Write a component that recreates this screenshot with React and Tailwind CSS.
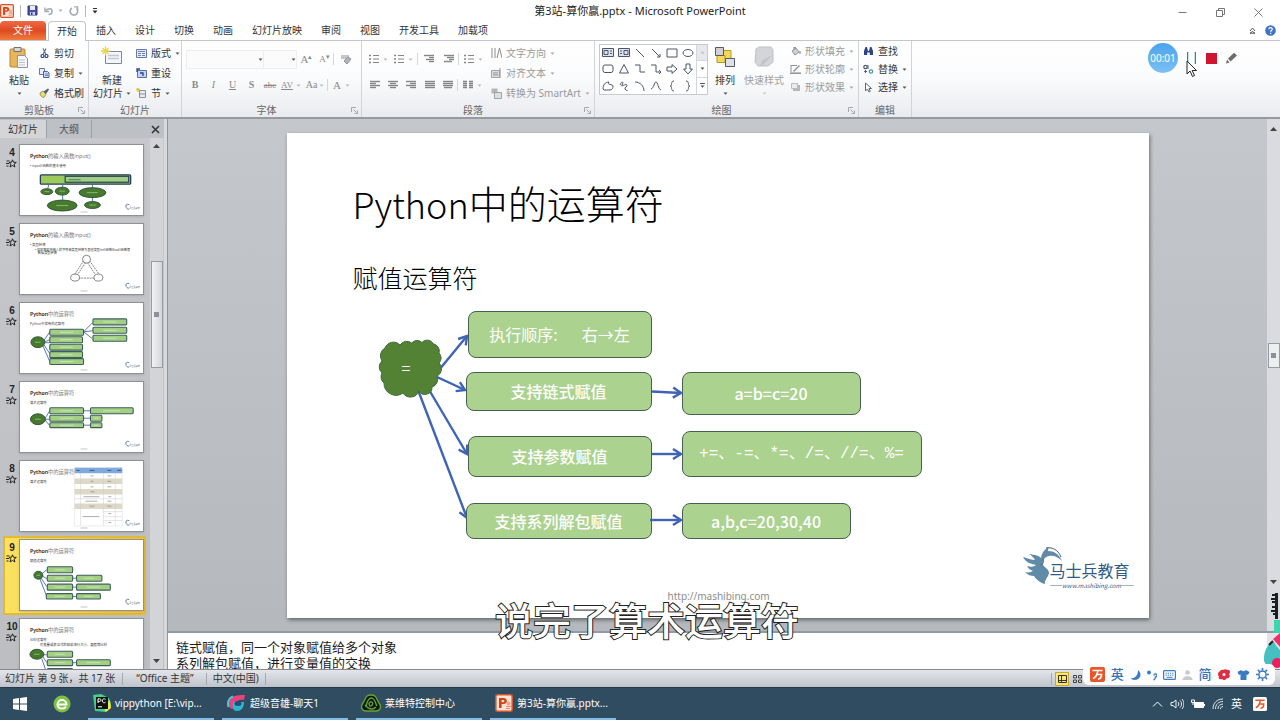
import React from "react";

const Svg = ({ w, h, children, className = "", vb }) => (
  <svg
    width={w}
    height={h}
    viewBox={vb || `0 0 ${w} ${h}`}
    fill="none"
    aria-hidden="true"
    className={`shrink-0 ${className}`}
  >
    {children}
  </svg>
);

const Caret = ({ className = "text-[#555]" }) => (
  <Svg w={5} h={3} className={className}>
    <path d="M0.5 0.5h4L2.5 2.8z" fill="currentColor" />
  </Svg>
);

/* ---------- title bar ---------- */

const PptLogo = ({ size = 14 }) => (
  <Svg w={size} h={size} vb="0 0 18 18">
    <rect x="0.8" y="0.8" width="16.4" height="16.4" rx="1.5" fill="#fbe3d8" stroke="#d3542a" strokeWidth="1.6" />
    <path d="M4 14V4h4.6c4.4 0 4.4 6 0 6H6.600v4z M6.600 6v2.200h1.600c1.600 0 1.600-2.200 0-2.200z" fill="#cf4517" fillRule="evenodd" />
    <path d="M11 12.500h5M11 14.500h4" stroke="#e98a63" />
    <circle cx="13.500" cy="9.500" r="2" fill="#f0a585" />
  </Svg>
);

function TitleBar() {
  return (
    <header className="flex h-[21px] shrink-0 items-center justify-between bg-white">
      <div className="flex flex-1 items-center gap-[6px]">
        <PptLogo />
        <span className="h-3 w-px bg-[#b9b9b9]" />
        <button aria-label="保存">
          <Svg w={11} h={11}>
            <path d="M1 1h9v9H1z" fill="#4a4fae" stroke="#34387f" />
            <path d="M3 1h5v4H3z" fill="#e9ecfb" />
            <path d="M3 7h5v3H3z" fill="#c9cdf0" />
            <path d="M4 7.5h1.5V10H4z" fill="#34387f" />
          </Svg>
        </button>
        <button aria-label="撤消" className="flex items-center gap-1">
          <Svg w={10} h={10}>
            <path d="M2 4.500C4 2 8 2 8 5S5.500 8.500 4.500 8.500" stroke="#a5a9b3" strokeWidth="1.600" />
            <path d="M1 1.500v4h4" stroke="#a5a9b3" strokeWidth="1.400" />
          </Svg>
          <Caret className="text-[#aaa]" />
        </button>
        <button aria-label="重复">
          <Svg w={10} h={10}>
            <path d="M3 2a3.800 3.800 0 1 0 4.500 0.500" stroke="#a5a9b3" strokeWidth="1.600" />
            <path d="M5 0.800h3.600v3.600" stroke="#a5a9b3" strokeWidth="1.300" />
          </Svg>
        </button>
        <span className="h-3 w-px bg-[#b9b9b9]" />
        <button aria-label="自定义快速访问工具栏">
          <Svg w={6} h={6}>
            <path d="M1 0.500h4" stroke="#333" />
            <path d="M0.500 2.500h5L3 5.500z" fill="#333" />
          </Svg>
        </button>
      </div>
      <h1 className="text-[11px] leading-4 text-[#1c1c1c]">第3站-算你赢.pptx - Microsoft PowerPoint</h1>
      <div className="flex flex-1 items-center justify-end gap-[29px] text-[#777]">
        <button aria-label="最小化" className="pt-1">
          <Svg w={9} h={9}><path d="M0.500 4.500h8" stroke="currentColor" /></Svg>
        </button>
        <button aria-label="还原" className="pt-1">
          <Svg w={9} h={9}>
            <path d="M0.500 2.500h6v6h-6zM2.500 2.500v-2h6v6h-2" stroke="currentColor" />
          </Svg>
        </button>
        <button aria-label="关闭" className="mr-[17px] pt-1">
          <Svg w={9} h={9}><path d="M0.500 0.500l8 8M8.500 0.500l-8 8" stroke="currentColor" /></Svg>
        </button>
      </div>
    </header>
  );
}

/* ---------- tabs ---------- */

const TABS = ["开始", "插入", "设计", "切换", "动画", "幻灯片放映", "审阅", "视图", "开发工具", "加载项"];

function RibbonTabs() {
  return (
    <nav className="flex h-[20px] shrink-0 items-end border-b border-[#c3c6cb] bg-white text-[10px] text-[#333]">
      <button className="h-[19px] w-[46px] rounded-t-sm bg-gradient-to-b from-[#ef6a45] via-[#dd4a22] to-[#f07a3c] text-white">
        文件
      </button>
      <div className="ml-[2px] flex items-end gap-px">
        {TABS.map((t, i) => (
          <button
            key={t}
            className={
              i === 0
                ? "-mb-px h-[20px] rounded-t-sm border border-b-0 border-[#c3c6cb] bg-white px-2"
                : "h-[19px] px-[9px]"
            }
          >
            {t}
          </button>
        ))}
      </div>
      <div className="ml-auto flex h-[19px] items-center gap-[9px] pr-1">
        <button aria-label="折叠功能区">
          <Svg w={7} h={7}>
            <path d="M1 4l2.500-3L6 4M1 6.200l2.500-1.700L6 6.200z" stroke="#555" />
          </Svg>
        </button>
        <button aria-label="帮助">
          <Svg w={11} h={11}>
            <circle cx="5.500" cy="5.500" r="5.300" fill="#3f73c4" />
            <path d="M3.800 4.300c0-2.200 3.500-2.200 3.500 0 0 1.200-1.700 1.200-1.700 2.500M5.600 7.800v1.200" stroke="#fff" strokeWidth="1.200" />
          </Svg>
        </button>
      </div>
    </nav>
  );
}

/* ---------- ribbon ---------- */

const Launcher = () => (
  <Svg w={7} h={7}>
    <path d="M0.500 5V0.500H5" stroke="#a3a6ab" />
    <path d="M2.500 2.500l3 3M6.500 3.500v3h-3" stroke="#a3a6ab" />
  </Svg>
);

function Group({ label, width, launcher, children }) {
  return (
    <section className={`flex shrink-0 flex-col border-r border-[#d0d3d8] ${width}`}>
      <div className="flex min-h-0 flex-1">{children}</div>
      <div className="flex h-[14px] items-center text-[#666]">
        <span className="flex-1 text-center">{label}</span>
        {launcher && (
          <button aria-label={`${label}设置`} className="mr-[3px]">
            <Launcher />
          </button>
        )}
      </div>
    </section>
  );
}

const Row = ({ icon, children, caret, tall, dim }) => (
  <button className={`flex items-center gap-1 whitespace-nowrap ${tall ? "h-5" : "h-[18px]"} ${dim ? "text-[#9a9a9a]" : "text-[#333]"}`}>
    <span className="flex w-3 shrink-0 justify-center">{icon}</span>
    {children}
    {caret && <Caret className={dim ? "text-[#aaa]" : "text-[#555]"} />}
  </button>
);

const Tool = ({ label, children, w = "w-[19px]" }) => (
  <button aria-label={label} className={`flex h-5 items-center justify-center text-[#8a8a8a] ${w}`}>
    {children}
  </button>
);

const Sep = () => <span className="h-3 w-px bg-[#d5d7da]" />;

const Scissors = () => (
  <Svg w={9} h={10}>
    <path d="M3 0.500l3 6M6 0.500l-3 6" stroke="#5b6fa5" strokeWidth="1.200" />
    <circle cx="2.500" cy="8" r="1.500" stroke="#26418c" strokeWidth="1.200" />
    <circle cx="6.500" cy="8" r="1.500" stroke="#26418c" strokeWidth="1.200" />
  </Svg>
);
const Copy = () => (
  <Svg w={11} h={10}>
    <path d="M0.500 0.500h5v6h-5z" fill="#e8eefb" stroke="#6579ab" />
    <path d="M4.500 3.500h4l1.500 1.500v4.500h-5.500z" fill="#c9d8f5" stroke="#4c639c" />
    <path d="M6 6h3M6 7.500h3" stroke="#6f8ac6" />
  </Svg>
);
const Brush = () => (
  <Svg w={11} h={10}>
    <path d="M1 5l3-2 3 3-2 3.500c-2 0-4-2-4-4.500z" fill="#e5dc7c" stroke="#9a9a4c" />
    <path d="M4.500 3.500L9 0.500l1 1-3 4.500z" fill="#54606e" />
  </Svg>
);
const LayoutIcon = () => (
  <Svg w={11} h={9}>
    <path d="M0.500 0.500h10v8h-10z" fill="#e6ecf8" stroke="#68769c" />
    <path d="M2 2.500h7M2 4.500h3M2 6.500h3M6 4.500h3M6 6.500h3" stroke="#6d83b8" />
  </Svg>
);
const ResetIcon = () => (
  <Svg w={11} h={10}>
    <path d="M1.500 2.500h9v7h-9z" fill="#c5d4f0" stroke="#5c6fa3" />
    <path d="M1 4V1h3M4 5h3v3" stroke="#28418c" strokeWidth="1.300" />
  </Svg>
);
const SectionIcon = () => (
  <Svg w={11} h={10}>
    <path d="M3.500 2.500h6v7h-6z" fill="#e9ebf0" stroke="#8a8f9b" />
    <path d="M4 6h5" stroke="#8a8f9b" />
    <path d="M0 1.500h4M2 0v4" stroke="#e0c335" strokeWidth="1.400" />
  </Svg>
);

function ClipboardGroup() {
  return (
    <Group label="剪贴板" width="w-[89px]" launcher>
      <button className="flex w-[38px] flex-col items-center pt-[5px] text-[#333]">
        <Svg w={20} h={23}>
          <rect x="1" y="3" width="15" height="18" rx="1" fill="#e8b55b" stroke="#b88633" />
          <path d="M5 1.500h7v4H5z" fill="#d5d7db" stroke="#77736b" />
          <path d="M8.500 9.500h7l3 3v9h-10z" fill="#f6f8fc" stroke="#8894ae" />
          <path d="M10 14h6M10 16.500h6M10 19h6" stroke="#b6c0d3" />
        </Svg>
        <span className="mt-[3px] leading-4">粘贴</span>
        <Caret className="mt-1 text-[#555]" />
      </button>
      <div className="flex flex-col pt-[2px]">
        <Row tall icon={<Scissors />}>剪切</Row>
        <Row tall caret icon={<Copy />}>复制</Row>
        <Row tall icon={<Brush />}>格式刷</Row>
      </div>
    </Group>
  );
}

function SlidesGroup() {
  return (
    <Group label="幻灯片" width="w-[93px]">
      <button className="flex w-[46px] flex-col items-center pt-[5px] text-[#333]">
        <Svg w={22} h={22}>
          <path d="M4.500 5.500h16v12h-16z" fill="#f3f5fa" stroke="#7f8899" />
          <path d="M7 9.500h11M7 12.500h11" stroke="#c2c8d4" strokeWidth="1.500" />
          <path d="M0 5h9M4.500 0.500v9M1.500 2l6 6M7.500 2l-6 6" stroke="#e8d648" strokeWidth="1.300" />
        </Svg>
        <span className="mt-[6px] leading-[13px]">新建</span>
        <span className="flex items-center gap-[3px] leading-[13px]">幻灯片<Caret /></span>
      </button>
      <div className="flex flex-col pt-[2px]">
        <Row tall caret icon={<LayoutIcon />}>版式</Row>
        <Row tall icon={<ResetIcon />}>重设</Row>
        <Row tall caret icon={<SectionIcon />}>节</Row>
      </div>
    </Group>
  );
}

function FontGroup() {
  return (
    <Group label="字体" width="w-[180px]" launcher>
      <div className="flex flex-col pt-2 pl-1">
        <div className="flex h-5 items-center">
          <div className="flex h-[19px] items-center border border-[#eceef1] bg-[#fbfbfc]">
            <select disabled aria-label="字体" className="w-[71px] appearance-none bg-transparent"><option></option></select>
            <Caret />
          </div>
          <div className="flex h-[19px] items-center border border-l-0 border-[#eceef1] bg-[#fbfbfc]">
            <select disabled aria-label="字号" className="w-[27px] appearance-none bg-transparent"><option></option></select>
            <Caret />
          </div>
          <Tool label="增大字号"><span className="font-['Liberation_Serif'] text-[11px]">A</span><span className="mb-1 text-[7px]">▴</span></Tool>
          <Tool label="减小字号" w="w-[17px]"><span className="font-['Liberation_Serif'] text-[9px]">A</span><span className="mb-1 text-[7px]">▾</span></Tool>
          <Sep />
          <Tool label="清除格式" w="w-6">
            <Svg w={12} h={11}>
              <path d="M1 1h8v4H1z" fill="#c4c6ca" />
              <path d="M4 7l4-4 3 2-4 5z" fill="#b1b4b9" stroke="#8f9298" />
            </Svg>
          </Tool>
        </div>
        <div className="mt-[6px] flex h-5 items-center font-['Liberation_Serif'] text-[10px]">
          <Tool label="加粗" w="w-[18px]"><b>B</b></Tool>
          <Tool label="倾斜"><i>I</i></Tool>
          <Tool label="下划线"><u>U</u></Tool>
          <Tool label="文字阴影"><b>S</b></Tool>
          <Tool label="删除线" w="w-[18px]"><s className="text-[9px]">abc</s></Tool>
          <Tool label="字符间距" w="w-6"><u className="mr-[3px] text-[9px]">AV</u><Caret className="text-[#bbb]" /></Tool>
          <Tool label="更改大小写" w="w-6"><span className="mr-[2px]">Aa</span><Caret className="text-[#bbb]" /></Tool>
          <Sep />
          <Tool label="字体颜色" w="w-[27px]"><span className="mr-1 text-[11px]">A</span><Caret className="text-[#bbb]" /></Tool>
        </div>
      </div>
    </Group>
  );
}

const Lines = ({ rows }) => (
  <Svg w={10} h={10}>
    {rows.map(([x, w], i) => (
      <path key={i} d={`M${x} ${i * 2 + 1.5}h${w}`} stroke="#858585" strokeWidth="1.400" />
    ))}
  </Svg>
);
const ListIcon = () => (
  <Svg w={10} h={10}>
    <path d="M0 1.500h2M0 5h2M0 8.500h2" stroke="#858585" strokeWidth="1.500" />
    <path d="M4 1.500h6M4 5h6M4 8.500h6" stroke="#858585" />
  </Svg>
);

function ParagraphGroup() {
  return (
    <Group label="段落" width="w-[233px]" launcher>
      <div className="flex w-[128px] flex-col pt-2 pl-1">
        <div className="flex h-5 items-center">
          <Tool label="项目符号" w="w-6"><ListIcon /><Caret className="ml-1 text-[#bbb]" /></Tool>
          <Tool label="编号" w="w-[27px]"><ListIcon /><Caret className="ml-1 text-[#bbb]" /></Tool>
          <Sep />
          <Tool label="减少缩进" w="w-[22px]"><Lines rows={[[0, 10], [5, 5], [2, 8], [5, 5]]} /></Tool>
          <Tool label="增加缩进" w="w-[18px]"><Lines rows={[[0, 10], [3, 7], [5, 5], [0, 8]]} /></Tool>
          <Sep />
          <Tool label="行距" w="w-7"><ListIcon /><Caret className="ml-1 text-[#bbb]" /></Tool>
        </div>
        <div className="mt-[6px] flex h-5 items-center">
          <Tool label="左对齐" w="w-[18px]"><Lines rows={[[0, 10], [0, 6], [0, 10], [0, 6]]} /></Tool>
          <Tool label="居中" w="w-[18px]"><Lines rows={[[0, 10], [2, 6], [0, 10], [2, 6]]} /></Tool>
          <Tool label="右对齐" w="w-[18px]"><Lines rows={[[0, 10], [4, 6], [0, 10], [4, 6]]} /></Tool>
          <Tool label="两端对齐"><Lines rows={[[0, 10], [0, 10], [0, 10], [0, 10]]} /></Tool>
          <Tool label="分散对齐" w="w-[18px]"><Lines rows={[[0, 10], [0, 10], [0, 10], [1, 8]]} /></Tool>
          <Sep />
          <Tool label="分栏" w="w-7">
            <Svg w={10} h={10}>
              <path d="M0 1.500h4M0 3.500h4M0 5.500h4M0 7.500h4M6 1.500h4M6 3.500h4M6 5.500h4M6 7.500h4" stroke="#858585" strokeWidth="1.300" />
            </Svg>
            <Caret className="ml-1 text-[#bbb]" />
          </Tool>
        </div>
      </div>
      <div className="flex flex-col pt-[2px]">
        <Row tall dim caret icon={<Svg w={11} h={11}><path d="M1 0v10M4 0v10M6 10L8.500 0 11 10" stroke="#8b8b8b" /></Svg>}>文字方向</Row>
        <Row tall dim caret icon={<Svg w={11} h={11}><path d="M0.500 2.500h8v7h-8z" fill="#dedfe1" stroke="#a1a3a7" /><path d="M9 0v10M2 5h5M2 7h5" stroke="#8f8f8f" /></Svg>}>对齐文本</Row>
        <Row tall dim caret icon={<Svg w={11} h={11}><path d="M0.500 0.500h6v5h-6z" fill="#b4b6ba" /><path d="M3.500 4.500h7v6h-7z" fill="#dedfe1" stroke="#9fa2a6" /></Svg>}>转换为 SmartArt</Row>
      </div>
    </Group>
  );
}

const SHAPES = [
  ["文本框", <path key="a" d="M0.500 1.500h11v8H0.500z M2 3.500h4v4H2z M8 4h2M8 6.500h2" fill="#dde3ef" />],
  ["竖排文本框", <path key="a" d="M0.500 1.500h11v8H0.500z M6 3.500h4v4H6z M2 4h2M2 6.500h2" fill="#dde3ef" />],
  ["直线", <path key="a" d="M2 2l8 8" />],
  ["箭头", <path key="a" d="M2 2l8 8M10 7v3H7" />],
  ["矩形", <path key="a" d="M1 2h10v8H1z" />],
  ["椭圆", <ellipse key="a" cx="6" cy="6" rx="5" ry="3.500" />],
  ["圆角矩形", <rect key="a" x="1" y="2" width="10" height="7.500" rx="2" />],
  ["三角形", <path key="a" d="M6 1.500L10.500 10h-9z" />],
  ["肘形连接符", <path key="a" d="M1 2h5v7h5" />],
  ["肘形箭头", <path key="a" d="M1 2h5v7h5M9 7l2 2-2 2" />],
  ["右箭头", <path key="a" d="M1 4h5V1.500L11 6l-5 4.500V8H1z" />],
  ["下箭头", <path key="a" d="M4 1h4v5h2.500L6 11 1.500 6H4z" />],
  ["任意多边形", <path key="a" d="M1 9c0-4 2-7 6-7-3 3 4 2 4 4s-1 4-3 4H2z" />],
  ["自由曲线", <path key="a" d="M2 5c2-5 4-3 2 0s4-2 5 0-3 2-2 4 3 1 2 2" />],
  ["弧形", <path key="a" d="M1 2c5 0 9 4 9 9" />],
  ["曲线", <path key="a" d="M1 9C4 8 4 2 6 2s2 7 5 8" />],
  ["左大括号", <path key="a" d="M8 1C4 1 7 6 4 6c3 0 0 5 4 5" />],
  ["右大括号", <path key="a" d="M4 1c4 0 1 5 4 5-3 0 0 5-4 5" />],
];

function DrawingGroup() {
  return (
    <Group label="绘图" width="w-[264px]" launcher>
      <div className="mt-[3px] ml-1 flex h-[51px] border border-[#c6c9ce] bg-white">
        <div className="grid grid-cols-6 grid-rows-3">
          {SHAPES.map(([name, d]) => (
            <button key={name} aria-label={name} className="flex w-4 items-center justify-center">
              <Svg w={12} h={12}><g stroke="#4d5566">{d}</g></Svg>
            </button>
          ))}
        </div>
        <div className="grid w-[11px] grid-rows-3 divide-y divide-[#d3d6da] border-l border-[#d3d6da]">
          <button aria-label="上一行" className="flex items-center justify-center bg-[#e6e8eb]"><Caret className="rotate-180 text-[#bbb]" /></button>
          <button aria-label="下一行" className="flex items-center justify-center"><Caret /></button>
          <button aria-label="更多形状" className="flex flex-col items-center justify-center gap-px"><span className="h-px w-[5px] bg-[#555]" /><Caret /></button>
        </div>
      </div>
      <button className="flex w-[34px] flex-col items-center pt-[5px] text-[#333]">
        <Svg w={22} h={22}>
          <path d="M8 4.500h9v9H8z" fill="#f2d95a" stroke="#b49a2c" />
          <path d="M3 9.500h8v7H3z" fill="#f2d95a" stroke="#b49a2c" />
          <path d="M1.500 1.500h8v8h-8z" fill="#d4cfd6" stroke="#5b5560" />
          <path d="M11.500 12.500h9v8h-9z" fill="#dde0ea" stroke="#565b6b" />
        </Svg>
        <span className="mt-1 leading-4">排列</span>
        <Caret className="mt-1 text-[#555]" />
      </button>
      <button className="flex w-11 flex-col items-center pt-[5px] text-[#a0a0a0]">
        <Svg w={22} h={22}>
          <path d="M3 3l3-2h12l2 3v12l-5 4H5l-3-4z" fill="#d3d5d8" stroke="#bfc1c5" />
          <path d="M19 9l-8 9-4 2 2-5z" fill="#c0c2c6" />
        </Svg>
        <span className="mt-1 whitespace-nowrap leading-4">快速样式</span>
        <Caret className="mt-1 text-[#ccc]" />
      </button>
      <div className="ml-[3px] flex flex-col pt-px">
        <Row dim caret icon={<Svg w={11} h={10}><path d="M2 5l4-3 3 4-4 3z" fill="#cfd1d4" stroke="#8f9195" /><path d="M4 4V1.500h2M10 5v3" stroke="#8f9195" strokeWidth="1.200" /></Svg>}>形状填充</Row>
        <Row dim caret icon={<Svg w={11} h={10}><path d="M1 1.500h6M1 1v7" stroke="#8f9195" /><path d="M3 7l6-6 1 1-6 6z" fill="#8f9195" /><path d="M0 9.200h11" stroke="#8f9195" strokeWidth="1.500" /></Svg>}>形状轮廓</Row>
        <Row dim caret icon={<Svg w={11} h={10}><path d="M3 3h7v6H3z" fill="#b5b7bb" /><path d="M1.500 1.500h6v5h-6z" fill="#ececee" stroke="#b9bbbf" /></Svg>}>形状效果</Row>
      </div>
    </Group>
  );
}

function EditGroup() {
  return (
    <Group label="编辑" width="w-[53px]">
      <div className="ml-[3px] flex flex-col pt-px">
        <Row icon={<Svg w={11} h={10}><path d="M1 9V5l1.500-4H4l1 4h1l1-4h1.500L10 5v4H6.800V6.500H4.200V9z" fill="#2f4486" /></Svg>}>查找</Row>
        <Row caret icon={<Svg w={11} h={10}><circle cx="2.500" cy="3" r="1.700" stroke="#4e5a75" strokeWidth="1.200" /><path d="M5 1v4M4 7.500H1.500M3 6L1.500 7.500 3 9" stroke="#4e5a75" /><circle cx="8" cy="7.500" r="1.700" stroke="#49a" strokeWidth="1.200" /></Svg>}>替换</Row>
        <Row caret icon={<Svg w={8} h={11}><path d="M1.500 1v8l2-2 1.500 3 1.300-.700L5 6.500h2.500z" fill="#fff" stroke="#5b6478" /></Svg>}>选择</Row>
      </div>
    </Group>
  );
}

function Ribbon() {
  return (
    <div className="flex h-[78px] shrink-0 border-b-2 border-[#96999e] bg-gradient-to-b from-white via-[#fafbfc] to-[#e9ebef] text-[10px] leading-[14px]">
      <ClipboardGroup />
      <SlidesGroup />
      <FontGroup />
      <ParagraphGroup />
      <DrawingGroup />
      <EditGroup />
    </div>
  );
}

/* ---------- slide thumbnails ---------- */

const Box = ({ x, y, w, h = 6 }) => (
  <g>
    <rect x={x} y={y} width={w} height={h} rx="1" fill="#a3cf85" stroke="#3d5f5a" strokeWidth="1.100" />
    <path d={`M${x + w * 0.3} ${y + h / 2}h${w * 0.4}`} stroke="#d3e9c4" strokeWidth="0.800" />
  </g>
);
const Blob = ({ x, y, rx, ry }) => (
  <g>
    <ellipse cx={x} cy={y} rx={rx} ry={ry} fill="#467a2c" stroke="#2e4c3d" strokeWidth="0.900" />
    <path d={`M${x - rx * 0.4} ${y}h${rx * 0.8}`} stroke="#a9cf92" strokeWidth="0.700" />
  </g>
);
const Link = ({ d }) => <path d={d} stroke="#4468b8" strokeWidth="0.900" />;

const Thumb = ({ title, sub, brand, children }) => (
  <svg viewBox="0 0 124 71" className="block w-full bg-white" fill="none">
    <text x="10" y="13.500" fontSize="5.300" fill="#777">
      <tspan fontWeight="600" fill="#222">Python</tspan>{title}
    </text>
    <text x="10" y="22.500" fontSize="3.400" fill="#444">{sub}</text>
    {children}
    {brand && (
      <g>
        <path d="M110 60c-3-1-4 1-3 3s3 2 3 1" stroke="#5c7288" strokeWidth="0.900" />
        <text x="110" y="64.500" fontSize="2.200" fill="#5c7288">马士兵教育</text>
        <path d="M61 67.500h7" stroke="#999" strokeWidth="0.600" />
      </g>
    )}
  </svg>
);

const THUMBS = [
  {
    n: 4, title: "的输入函数input()", sub: "• input()函数的基本使用",
    art: (
      <g>
        <rect x="20.500" y="30" width="91" height="9.500" rx="1" fill="#9ccb5c" stroke="#27405a" strokeWidth="1.300" />
        <rect x="45.500" y="31.500" width="64" height="6" fill="#a3cf85" stroke="#27405a" strokeWidth="1.200" />
        <path d="M49 35h12" stroke="#3d5f5a" strokeWidth="0.800" />
        <Link d="M29 40l-1 4M43 40v20M73 40v18" />
        <Blob x={27} y={47} rx={6} ry={3} /><Blob x={42.500} y={46.500} rx={7} ry={4} />
        <Blob x={73} y={48} rx={13.500} ry={5} /><Blob x={42.500} y={61} rx={15} ry={5.500} /><Blob x={73} y={60.500} rx={8} ry={3.500} />
      </g>
    ),
  },
  {
    n: 5, title: "的输入函数input()", sub: "• 类型转换",
    art: (
      <g>
        <text x="15" y="27" fontSize="3.200" fill="#333">• 如果需要将输入的字符串类型转换为其他类型int()函数float()函数等</text>
        <text x="18" y="30.500" fontSize="3.200" fill="#333">数据类型转换</text>
        <g stroke="#666" strokeWidth="0.800">
          <path d="M64 37L55 51M70 37l10 14M59 54.500h18M66 39l-8 12M68 39l8 12" strokeDasharray="2 0.800" />
          <circle cx="67" cy="35.500" r="4" fill="#fff" /><ellipse cx="55.500" cy="54" rx="4.500" ry="3.500" fill="#fff" /><ellipse cx="79" cy="54" rx="4.500" ry="3.500" fill="#fff" />
        </g>
      </g>
    ),
  },
  {
    n: 6, title: "中的运算符", sub: "Python中常用的运算符",
    art: (
      <g>
        <Link d="M24 38l6-9M25 39l5-2M25 40h5M24 42l6 9M23 43l7 16M64 29l9-9M64 29l9-1M64 29l9 7" />
        <Blob x={18} y={39.500} rx={7} ry={5.500} />
        <Box x={30} y={26.500} w={34} /><Box x={30} y={34} w={33} /><Box x={30} y={41.500} w={33} /><Box x={30} y={49} w={33} /><Box x={30} y={56} w={34} />
        <Box x={73.500} y={16} w={34} /><Box x={73.500} y={24.500} w={34} /><Box x={73.500} y={32.500} w={34} />
      </g>
    ),
  },
  {
    n: 7, title: "中的运算符", sub: "算术运算符",
    art: (
      <g>
        <Link d="M25 37l5-8M25 37.500h5M25 38l5 6M64 29h7M64 36.500h7M64 43.500h7" />
        <Blob x={18} y={37.500} rx={7.500} ry={5.500} />
        <Box x={30} y={26} w={34} /><Box x={30} y={33.500} w={34} /><Box x={30} y={41} w={34} h={5} />
        <Box x={71} y={26} w={43} /><Box x={71} y={33.500} w={11.500} /><Box x={71} y={41} w={11.500} h={5} />
      </g>
    ),
  },
  {
    n: 8, title: "中的运算符", sub: "算术运算符",
    art: (
      <g>
        <path d="M55 6.500h48v59H55z" fill="#fff" stroke="#ddd" strokeWidth="0.500" />
        <path d="M55 9.500h48" stroke="#7faadb" strokeWidth="5.500" />
        <path d="M55 20.500h48M55 31h48M55 45.500h48" stroke="#ddd8c8" strokeWidth="5.500" />
        <path d="M61 12v53M84 12v53M96 12v53M55 38h48M84 51h19M84 56h19M84 60h19" stroke="#ccc" strokeWidth="0.500" />
        <path d="M57 9.500h3M70 9.500h5M88 9.500h4M98 9.500h4" stroke="#33557f" strokeWidth="0.900" />
        <path d="M71 15h3M71 20.500h3M71 26h3M71 31h4M64 36h16M66 40.500h12M70 45.500h5M63 56h17M88 15h4M88 20.500h4M88 26h4M89 36h3M88 40.500h4M88 45.500h4M89 53h3M89 62h3" stroke="#8a8a86" strokeWidth="0.700" />
      </g>
    ),
  },
  {
    n: 9, title: "中的运算符", sub: "赋值运算符",
    art: (
      <g>
        <Link d="M22 34l5-4M22 36l5 3M21 38l6 9M20 39l7 18M53 38.500h4M53 47.500h4M53 57h4" />
        <Blob x={18.500} y={35.500} rx={4.500} ry={4} />
        <Box x={27.500} y={27} w={25.500} /><Box x={27.500} y={35.500} w={25.500} /><Box x={27.500} y={44.500} w={25.500} /><Box x={26.500} y={54} w={26.500} h={5.500} />
        <Box x={57} y={35.500} w={25.500} /><Box x={57} y={44.500} w={34} /><Box x={57} y={54} w={24} h={5.500} />
      </g>
    ),
  },
  {
    n: 10, title: "中的运算符", sub: "比较运算符",
    art: (
      <g>
        <text x="20" y="27.500" fontSize="3.400" fill="#333">对变量或表达式的结果进行大小、真假等比较</text>
        <Link d="M23 36h4M23 38l4 6M22 40l5 15M53 44h4" />
        <Blob x={17} y={35.500} rx={7} ry={5} />
        <Box x={27.500} y={32.500} w={25.500} /><Box x={27.500} y={41} w={25.500} /><Box x={57} y={41} w={34} /><Box x={27.500} y={50} w={25.500} />
      </g>
    ),
  },
];

const StarMark = () => (
  <Svg w={11} h={9}>
    <path d="M0.500 2h3M0 4.500h3M0.500 7h2" stroke="#222" />
    <path d="M6.500 0.800l1 2.400 2.800.2-2.200 1.700.8 2.900-2.400-1.500L4 8l.9-2.900L3 3.400l2.600-.2z" stroke="#222" />
  </Svg>
);

const UpArrow = ({ className = "" }) => (
  <Svg w={7} h={4} className={className}><path d="M0 4L3.500 0 7 4z" fill="#444" /></Svg>
);

function SlidePanel() {
  return (
    <aside className="flex w-[164px] shrink-0 flex-col bg-gradient-to-b from-[#c6c8cc] to-[#bcbec2]">
      <div className="flex h-[19px] shrink-0 items-center bg-[#bdc0c5] pt-px text-[10px] text-[#333]">
        <button className="h-full w-[46px] bg-[#d3d5d9]">幻灯片</button>
        <button className="h-full w-[46px] border-x border-[#9ea1a6] text-[#555]">大纲</button>
        <button aria-label="关闭窗格" className="mr-1 ml-auto">
          <Svg w={9} h={9}><path d="M1 1l7 7M8 1L1 8" stroke="#333" strokeWidth="1.500" /></Svg>
        </button>
      </div>
      <div className="flex min-h-0 flex-1">
        <ol className="min-w-0 flex-1 overflow-hidden pt-[3px] pl-[3px]">
          {THUMBS.map((t) => (
            <li
              key={t.n}
              className={`mr-1 flex h-[79px] items-start border-2 ${
                t.n === 9
                  ? "border-[#e3bb2e] bg-gradient-to-r from-[#fbe25f] to-[#f6c24a]"
                  : "border-transparent"
              }`}
            >
              <div className="flex w-[14px] flex-col items-center gap-px pt-1">
                <span className="font-['Liberation_Sans'] text-[10px] font-bold leading-[11px] text-[#222]">{t.n}</span>
                <StarMark />
              </div>
              <button className="mt-px w-[126px] border border-[#8e9196] shadow-sm" aria-label={`幻灯片 ${t.n}`}>
                <Thumb title={t.title} sub={t.sub} brand={t.n < 10}>{t.art}</Thumb>
              </button>
            </li>
          ))}
        </ol>
        <div className="flex w-[13px] flex-col items-center bg-[#d2d4d8] py-[6px]">
          <UpArrow />
          <span className="flex-[112]" />
          <div className="flex h-[107px] w-3 items-center justify-center border border-[#989ba1] bg-gradient-to-r from-[#f1f2f4] to-[#d3d6da]">
            <span className="size-[5px] bg-[#8d9096]" />
          </div>
          <span className="flex-[288]" />
          <UpArrow className="rotate-180" />
        </div>
        <span className="w-px" />
      </div>
    </aside>
  );
}

/* ---------- slide ---------- */

const Node = ({ pos, children, kind = "font-medium" }) => (
  <div className={`absolute flex items-center justify-center whitespace-pre rounded-lg border border-[#47604f] bg-[#abd28f] text-base leading-5 text-white ${kind} ${pos}`}>
    {children}
  </div>
);

function Slide() {
  return (
    <article className="relative h-[485px] w-[862px] shrink-0 bg-white font-['Noto_Sans_CJK_SC',sans-serif] shadow-[1px_2px_4px_rgba(0,0,0,0.45)]">
      <h2 className="absolute top-[41px] left-[66px] whitespace-nowrap text-[39px] font-light leading-[56px] text-black">
        <span className="text-[36px]">Python</span>中的运算符
      </h2>
      <p className="absolute top-[130px] left-[66px] whitespace-nowrap text-[25px] font-light leading-7 text-black">赋值运算符</p>

      <svg viewBox="0 0 862 485" fill="none" className="absolute inset-0" aria-hidden="true">
        <defs>
          <marker id="head" markerWidth="14" markerHeight="14" refX="10" refY="7" orient="auto" markerUnits="userSpaceOnUse">
            <path d="M2 2l8 5-8 5" fill="none" stroke="#3f64b5" strokeWidth="2.400" />
          </marker>
        </defs>
        <g stroke="#3f64b5" strokeWidth="2.400">
          <path d="M152 237L180 203" markerEnd="url(#head)" />
          <path d="M150 244L178 257" markerEnd="url(#head)" />
          <path d="M141 255L180 321" markerEnd="url(#head)" />
          <path d="M131 257L180 385" markerEnd="url(#head)" />
        </g>
        <path
          d="M98 215A9 9 0 0 1 113 212 A8 8 0 0 1 124.700 210 A7 7 0 0 1 135 209.500 A7 7 0 0 1 146.500 211 A7 7 0 0 1 152 220 A7 7 0 0 1 152 230 A8 8 0 0 1 150 243 A8 8 0 0 1 145 254 A7 7 0 0 1 132 258 A9 9 0 0 1 116 260 A12 12 0 0 1 97 250 A8 8 0 0 1 95 240 A8 8 0 0 1 95 228 A9 9 0 0 1 98 215z"
          fill="#548235"
          stroke="#3f6a3d"
        />
      </svg>
      <span className="absolute top-[224px] left-[115px] text-base leading-5 text-white">=</span>

      <Node pos="left-[181px] top-[178px] w-[184px] h-[47px]" kind="gap-6"><span>执行顺序:</span><span>右→左</span></Node>
      <Node pos="left-[179px] top-[239px] w-[186px] h-[39px]">支持链式赋值</Node>
      <Node pos="left-[181px] top-[303px] w-[184px] h-[41px]">支持参数赋值</Node>
      <Node pos="left-[179px] top-[370px] w-[186px] h-[36px]">支持系列解包赋值</Node>
      <Node pos="left-[395px] top-[239px] w-[179px] h-[43px]">a=b=c=20</Node>
      <Node pos="left-[395px] top-[298px] w-[240px] h-[46px]" kind="font-['Liberation_Mono','Noto_Sans_CJK_SC',monospace]">
        +=、-=、*=、/=、//=、%=
      </Node>
      <Node pos="left-[395px] top-[370px] w-[169px] h-[36px]">a,b,c=20,30,40</Node>

      <svg viewBox="0 0 862 485" fill="none" className="absolute inset-0" aria-hidden="true">
        <g stroke="#3f64b5" strokeWidth="2.400">
          <path d="M365 258.500L394 260" markerEnd="url(#head)" />
          <path d="M365 321H394" markerEnd="url(#head)" />
          <path d="M363 387H394" markerEnd="url(#head)" />
        </g>
      </svg>

      <div className="absolute top-[412px] left-[735px] flex items-end">
        <Svg w={42} h={40}>
          <path d="M1 12c5 1 8 3 12 3-2-3-3-4-6-6 6 1 9 1 12 4 1-6 4-9 8-11-1 2-1 3-1 4 6 0 11 3 14 10-4-4-8-6-13-5-5 1-7 5-6 9 2 3 6 4 6 8-1 5-5 7-4 11-5-1-9-5-11-8-3 0-6-1-9-4 4 1 6 0 8-1-3-1-5-3-6-5 4 1 7 1 9-1-4-1-10-2-13-8z" fill="#5f8aa8" />
          <path d="M24 3c5-1 12 1 15 9M21 14c1 3 0 5-2 6" stroke="#3f6487" />
        </Svg>
      </div>
      <div className="absolute top-[425px] left-[763px] w-[84px] text-[#315b86]">
        <p className="whitespace-nowrap text-base leading-6">马士兵教育</p>
        <div className="flex items-center">
          <span className="h-px flex-1 bg-[#9db4c9]" />
          <span className="text-[6px] italic leading-[8px]">www.mashibing.com</span>
          <span className="h-px flex-1 bg-[#9db4c9]" />
        </div>
      </div>
      <p className="absolute top-[455px] left-[381px] font-['Noto_Sans',sans-serif] text-[10px] leading-4 text-[#8d8d8d]">http://mashibing.com</p>
    </article>
  );
}

function Editor() {
  return (
    <main className="flex min-w-0 flex-1 flex-col border-l border-[#8f959d]">
      <div className="flex min-h-0 flex-1">
        <div className="flex min-w-0 flex-1 items-center justify-center overflow-hidden bg-gradient-to-b from-[#c4c8cc] to-[#b5b9bd]">
          <Slide />
        </div>
        <div className="flex w-[13px] flex-col items-center bg-[#d9dbdf] pt-[8px] pb-[47px]">
          <UpArrow />
          <span className="flex-1" />
          <div className="flex h-[25px] w-3 items-center justify-center border border-[#989ba1] bg-[#eceef0]">
            <span className="size-[5px] bg-[#8d9096]" />
          </div>
          <span className="flex-1" />
          <UpArrow className="rotate-180" />
        </div>
      </div>
      <div className="flex h-[38px] shrink-0 border-t-2 border-[#8f9ba6] bg-white">
        <textarea
          aria-label="备注"
          rows={2}
          className="min-w-0 flex-1 resize-none overflow-hidden bg-white pt-[6px] pl-2 text-[13px] leading-4 text-[#1c1c1c] outline-none"
          defaultValue={"链式赋值，同一个对象赋值给多个对象\n系列解包赋值，进行变量值的交换"}
        />
        <span className="w-[13px] bg-[#e3e4e7]" />
      </div>
    </main>
  );
}

/* ---------- status bar ---------- */

function StatusBar() {
  return (
    <footer className="flex h-[18px] shrink-0 items-center border-t border-[#85888e] bg-gradient-to-b from-[#e3e5e9] to-[#bfc4cc] pl-[5px] text-[10px] text-[#333]">
      <span>幻灯片 第 9 张，共 17 张</span>
      <span className="mx-[7px] h-3 w-px bg-[#a5a8ae]" />
      <span className="px-[6px]">“Office 主题”</span>
      <span className="mx-[6px] h-3 w-px bg-[#a5a8ae]" />
      <span>中文(中国)</span>
      <span className="mx-[6px] h-3 w-px bg-[#a5a8ae]" />
      <div className="ml-auto flex items-center gap-px pr-[196px]">
        <span className="mr-[2px] h-3 w-px bg-[#a5a8ae]" />
        <button aria-label="普通视图" className="flex size-[14px] items-center justify-center border border-[#c9a92c] bg-[#fbe678]">
          <Svg w={9} h={8}><path d="M0.500 0.500h8v7h-8zM0.500 5.500h3M3.500 0.500v7M3.500 5.500h5" stroke="#333" /></Svg>
        </button>
        <button aria-label="幻灯片浏览" className="flex size-[14px] items-center justify-center">
          <Svg w={9} h={8}><path d="M0.500 0.500h3v2.500h-3zM5.500 0.500h3v2.500h-3zM0.500 5h3v2.500h-3zM5.500 5h3v2.500h-3z" stroke="#444" /></Svg>
        </button>
      </div>
    </footer>
  );
}

/* ---------- taskbar ---------- */

const WanIcon = ({ s, invert }) => (
  <Svg w={s} h={s} vb="0 0 15 15">
    <rect width="15" height="15" rx="2" fill={invert ? "#fff" : "#e8562a"} />
    <path d="M2.500 3.500h10M3 11.500c3-1 4-3 5-8M6 7.500h5.500c0 2-1 4.500-3.500 4.500" stroke={invert ? "#e8562a" : "#fff"} strokeWidth="1.600" />
  </Svg>
);

const APPS = [
  {
    name: "vippython [E:\\vip...",
    icon: (
      <Svg w={18} h={18}>
        <path d="M0 1l8-1 8 4 2 8-5 6-11-1z" fill="#3fd08c" />
        <path d="M10 12l7-6 1 8-5 4z" fill="#f3e84a" />
        <rect x="3" y="3" width="12" height="12" fill="#111" />
        <path d="M5 9V4.800h1.500c2 0 2 2.600 0 2.600H5M12.500 5.300c-1.500-1-3.200-.3-3.200 1.500s1.700 2.500 3.200 1.500M5 12.800h4" stroke="#fff" />
      </Svg>
    ),
  },
  {
    name: "超级音雄-聊天1",
    icon: (
      <Svg w={19} h={18}>
        <path d="M1 9C1 3 6 1 18 1l-1 5C11 5 8 8 9 12l-4 3C2 14 1 12 1 9z" fill="#e8437c" />
        <path d="M6 8h11c0 6-3 9-7 9s-5-3-4-9z" fill="#2fb6cf" />
        <ellipse cx="11" cy="9.500" rx="3.500" ry="2.500" fill="#1f4f77" />
        <path d="M1.500 13C0 8 2 4 6 2.500" stroke="#47c8dc" strokeWidth="2" />
      </Svg>
    ),
  },
  {
    name: "莱维特控制中心",
    icon: (
      <Svg w={20} h={18}>
        <path d="M10 1c6 0 5 4 8 8s1 8-3 8H5c-4 0-6-4-3-8s2-8 8-8z" fill="#0d1a0c" stroke="#63a437" strokeWidth="1.300" />
        <path d="M5 13c1-7 3-9 6-9 3 1 3 4 5 8M4 11c5 6 9 4 11 2M8 9c2-3 5 0 3 2s-3 1-3-2z" stroke="#63a437" strokeWidth="1.300" />
      </Svg>
    ),
  },
  { name: "第3站-算你赢.pptx...", icon: <PptLogo size={18} /> },
];

function Taskbar() {
  return (
    <div className="flex h-[33px] shrink-0 items-stretch border-t border-[#25394a] bg-[#304c61] text-[10px] text-white">
      <button aria-label="开始" className="flex w-10 items-center justify-center">
        <Svg w={14} h={14}>
          <path d="M0 2l6-.9v5.500H0zM7 1l7-1v6.600H7zM0 7.500h6V13l-6-.9zM7 7.500h7V14l-7-1z" fill="#fff" />
        </Svg>
      </button>
      <button aria-label="浏览器" className="flex w-11 items-center justify-center">
        <Svg w={18} h={18}>
          <circle cx="9" cy="9" r="8.500" fill="#7cc242" />
          <path d="M4.500 9.500h9c0-6-9-6-9 0 0 5 7 5 8.500 2" stroke="#fff" strokeWidth="2" />
        </Svg>
      </button>
      <div className="ml-1 flex gap-2">
        {APPS.map((a) => (
          <button key={a.name} className="flex w-[126px] items-center gap-[4px] border-b-2 border-[#86bde6] pl-[5px] whitespace-nowrap">
            {a.icon}
            {a.name}
          </button>
        ))}
      </div>
      <div className="ml-auto flex items-center gap-[7px] pr-[13px]">
        <button aria-label="显示隐藏的图标"><Svg w={11} h={8}><path d="M1 6.500L5.500 2 10 6.500" stroke="#fff" /></Svg></button>
        <Svg w={14} h={12}>
          <path d="M1 4.500h2L6 2v8L3 7.500H1zM8 4c1 1.200 1 2.800 0 4M10 2.500c2 2 2 5 0 7M12 1c2.500 3 2.500 7 0 10" stroke="#e8eef2" />
        </Svg>
        <Svg w={14} h={10}>
          <path d="M3.500 3.500h9v5h-9z" fill="#fff" stroke="#fff" /><path d="M13.500 5v2M0.500 1h3v2.500h-3zM2 3.500V6" stroke="#fff" />
        </Svg>
        <Svg w={12} h={12}>
          <path d="M1 11C1 5 5 1 11 1M3.500 11c0-4.500 3-7.500 7.500-7.500M6 11c0-3 2-5 5-5M8.500 11c0-1.500 1-2.500 2.500-2.500" stroke="#dfe7ec" />
        </Svg>
        <span className="text-[11px]">英</span>
        <span className="ml-1"><WanIcon s={14} invert /></span>
      </div>
    </div>
  );
}

/* ---------- floating layers ---------- */

function Recorder() {
  return (
    <div className="absolute top-[43px] right-[42px] flex items-center gap-[9px]">
      <div className="flex size-[30px] items-center justify-center rounded-full bg-gradient-to-b from-[#4aa3ee] to-[#7cc0f3] text-[10px] text-white">00:01</div>
      <button aria-label="暂停"><Svg w={9} h={12}><path d="M0.500 0v12M8.500 0v12" stroke="#2387a5" strokeWidth="1.500" /></Svg></button>
      <button aria-label="停止" className="ml-px size-[11px] bg-[#cf1530]" />
      <button aria-label="画笔">
        <Svg w={12} h={12}><path d="M0 11.500l1-4 2.500 3zM2 6.500L8 0.800 11 3.500 4.500 9.500z" fill="#6d6d6d" /></Svg>
      </button>
      <Svg w={12} h={18} className="absolute top-[17px] left-[38px]">
        <path d="M1 1v13l3-3 2.500 5.500 2-1L6.200 10.500H10.500z" fill="#fff" stroke="#222" />
      </Svg>
    </div>
  );
}

function ImeBar() {
  return (
    <div className="absolute right-[5px] bottom-[35px] flex h-[21px] w-[192px] items-center justify-between rounded-md bg-[#fdfdfe] pr-[6px] pl-[7px] text-[13px] font-medium leading-none text-[#3573b8]">
      <WanIcon s={15} />
      <button>英</button>
      <button aria-label="月亮模式"><Svg w={11} h={12}><path d="M8 1c0 5-2 8-7.500 8.500C3 12 10 11.500 10.500 6 10.500 4 9.500 2 8 1z" fill="#3a7cc4" /></Svg></button>
      <button aria-label="标点"><Svg w={11} h={12}><circle cx="3" cy="3.500" r="2" fill="#3a7cc4" /><path d="M8 6.500a1.500 1.500 0 1 1 1.500 1.500c0 1.500-.8 2.500-2 3" stroke="#3a7cc4" strokeWidth="1.400" /></Svg></button>
      <button aria-label="软键盘"><Svg w={13} h={10}><rect x="0.600" y="0.600" width="11.800" height="8.800" rx="1" stroke="#3a7cc4" strokeWidth="1.200" /><path d="M2.500 3.200h8M2.500 5.200h8" stroke="#3a7cc4" strokeDasharray="1.300 0.900" /><path d="M3.500 7.300h6" stroke="#3a7cc4" /></Svg></button>
      <button aria-label="账户"><Svg w={11} h={12}><circle cx="5.500" cy="3.500" r="2.300" fill="#c9c9cb" /><path d="M0.500 11c0-5 10-5 10 0z" fill="#c9c9cb" /></Svg></button>
      <button>简</button>
      <button aria-label="表情"><Svg w={14} h={12}><path d="M1 4c2-1 2-4 5-3 2-1 3-1 4 0 3-1 4 3 2 4 2 2 0 5-2 4-2 3-4 2-5 1-3 1-4-1-3-3-1 0-1-2-1-3z" fill="#dc2f43" /><circle cx="7" cy="5.500" r="1.500" fill="#fff" /></Svg></button>
      <button aria-label="皮肤"><Svg w={13} h={12}><path d="M4 1c1 1.500 4 1.500 5 0l3.500 2-1.500 3-1.500-.5V11h-6V5.500L2 6 .5 3z" fill="#3a7cc4" /></Svg></button>
      <button aria-label="设置">
        <Svg w={13} h={13}>
          <circle cx="6.500" cy="6.500" r="3.600" stroke="#3a7cc4" strokeWidth="1.500" />
          <path d="M6.500 0v2.500M6.500 10.500V13M0 6.500h2.500M10.500 6.500H13M1.900 1.900l1.800 1.800M9.300 9.300l1.800 1.800M11.100 1.900L9.300 3.700M3.700 9.300l-1.800 1.800" stroke="#3a7cc4" strokeWidth="1.600" />
        </Svg>
      </button>
    </div>
  );
}

function SideMascot() {
  return (
    <Svg w={17} h={82} className="absolute right-0 bottom-[47px]">
      <path d="M12 2h3v26h-3z" fill="#1c1f22" />
      <path d="M9 4h4M8 8h5M9 11h4M9 16h4M8 20h5M10 23h3" stroke="#1c1f22" strokeWidth="2" />
      <path d="M11 29h6v13h-6z" fill="#3fd3ae" />
      <path d="M17 42l-7 6 7 8z" fill="#f0306b" />
      <path d="M1 70C0 58 8 50 11 51c2 4 4 6 6 8v15H3z" fill="#45bfc0" />
      <path d="M6 54l4-4" stroke="#222" strokeWidth="2" />
      <circle cx="14" cy="72" r="5" fill="#ec1f5f" />
    </Svg>
  );
}

export default function App() {
  return (
    <div className="relative flex h-screen flex-col overflow-hidden bg-white font-['Noto_Sans','Noto_Sans_CJK_SC',sans-serif]">
      <TitleBar />
      <RibbonTabs />
      <Ribbon />
      <div className="flex min-h-0 flex-1 gap-[3px] bg-[#d7d9dc]">
        <SlidePanel />
        <Editor />
      </div>
      <StatusBar />
      <Taskbar />
      <Recorder />
      <SideMascot />
      <ImeBar />
      <p className="pointer-events-none absolute inset-x-0 bottom-[74px] pl-[14px] text-center text-[38px] leading-[52px] font-medium text-white [-webkit-text-stroke:2px_#222] [paint-order:stroke_fill]">
        说完了算术运算符
      </p>
    </div>
  );
}
